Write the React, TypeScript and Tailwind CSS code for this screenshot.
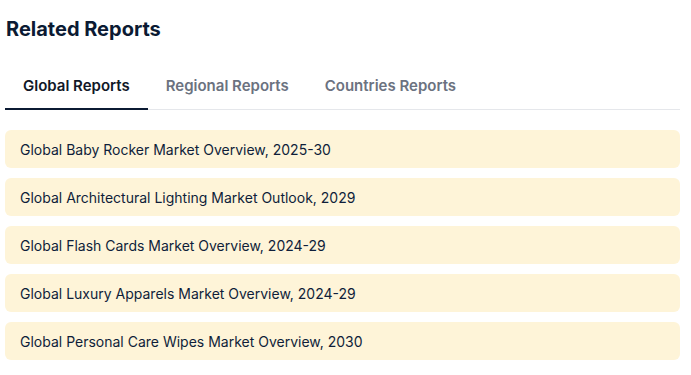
import React, { useState } from "react";

const tabs = ["Global Reports", "Regional Reports", "Countries Reports"];

const reports = [
    "Global Baby Rocker Market Overview, 2025-30",
    "Global Architectural Lighting Market Outlook, 2029",
    "Global Flash Cards Market Overview, 2024-29",
    "Global Luxury Apparels Market Overview, 2024-29",
    "Global Personal Care Wipes Market Overview, 2030",
];

const App: React.FC = () => {
    const [active, setActive] = useState<number>(0);

    return (
        <div className="w-full bg-white px-[5px] pt-[15px] font-['Inter',sans-serif] pr-[11px]">
            <h2 className="text-[20px] leading-[28px] font-bold text-[#0b1a33] pl-[1px]">Related Reports</h2>
            <div className="mt-[32px] flex border-b border-[#e5e7eb]">
                {tabs.map((tab, i) => (
                    <button
                        key={tab}
                        onClick={() => setActive(i)}
                        className={
                            i === active
                                ? "px-[18px] pb-[11px] text-[15px] leading-[22px] font-semibold text-[#111827] border-b-2 border-[#0b1a33] -mb-px"
                                : "px-[18px] pb-[11px] text-[15px] leading-[22px] font-semibold text-[#6b7280] border-b-2 border-transparent -mb-px"
                        }
                    >
                        {tab}
                    </button>
                ))}
            </div>
            <div className="mt-[20px] flex flex-col gap-[10px]">
                {reports.map((r) => (
                    <div key={r} className="h-[38px] flex items-center rounded-[6px] bg-[#fef4d8] px-[15px] text-[14px] text-[#0f1e3a]">
                        {r}
                    </div>
                ))}
            </div>
        </div>
    );
};

export default App;
